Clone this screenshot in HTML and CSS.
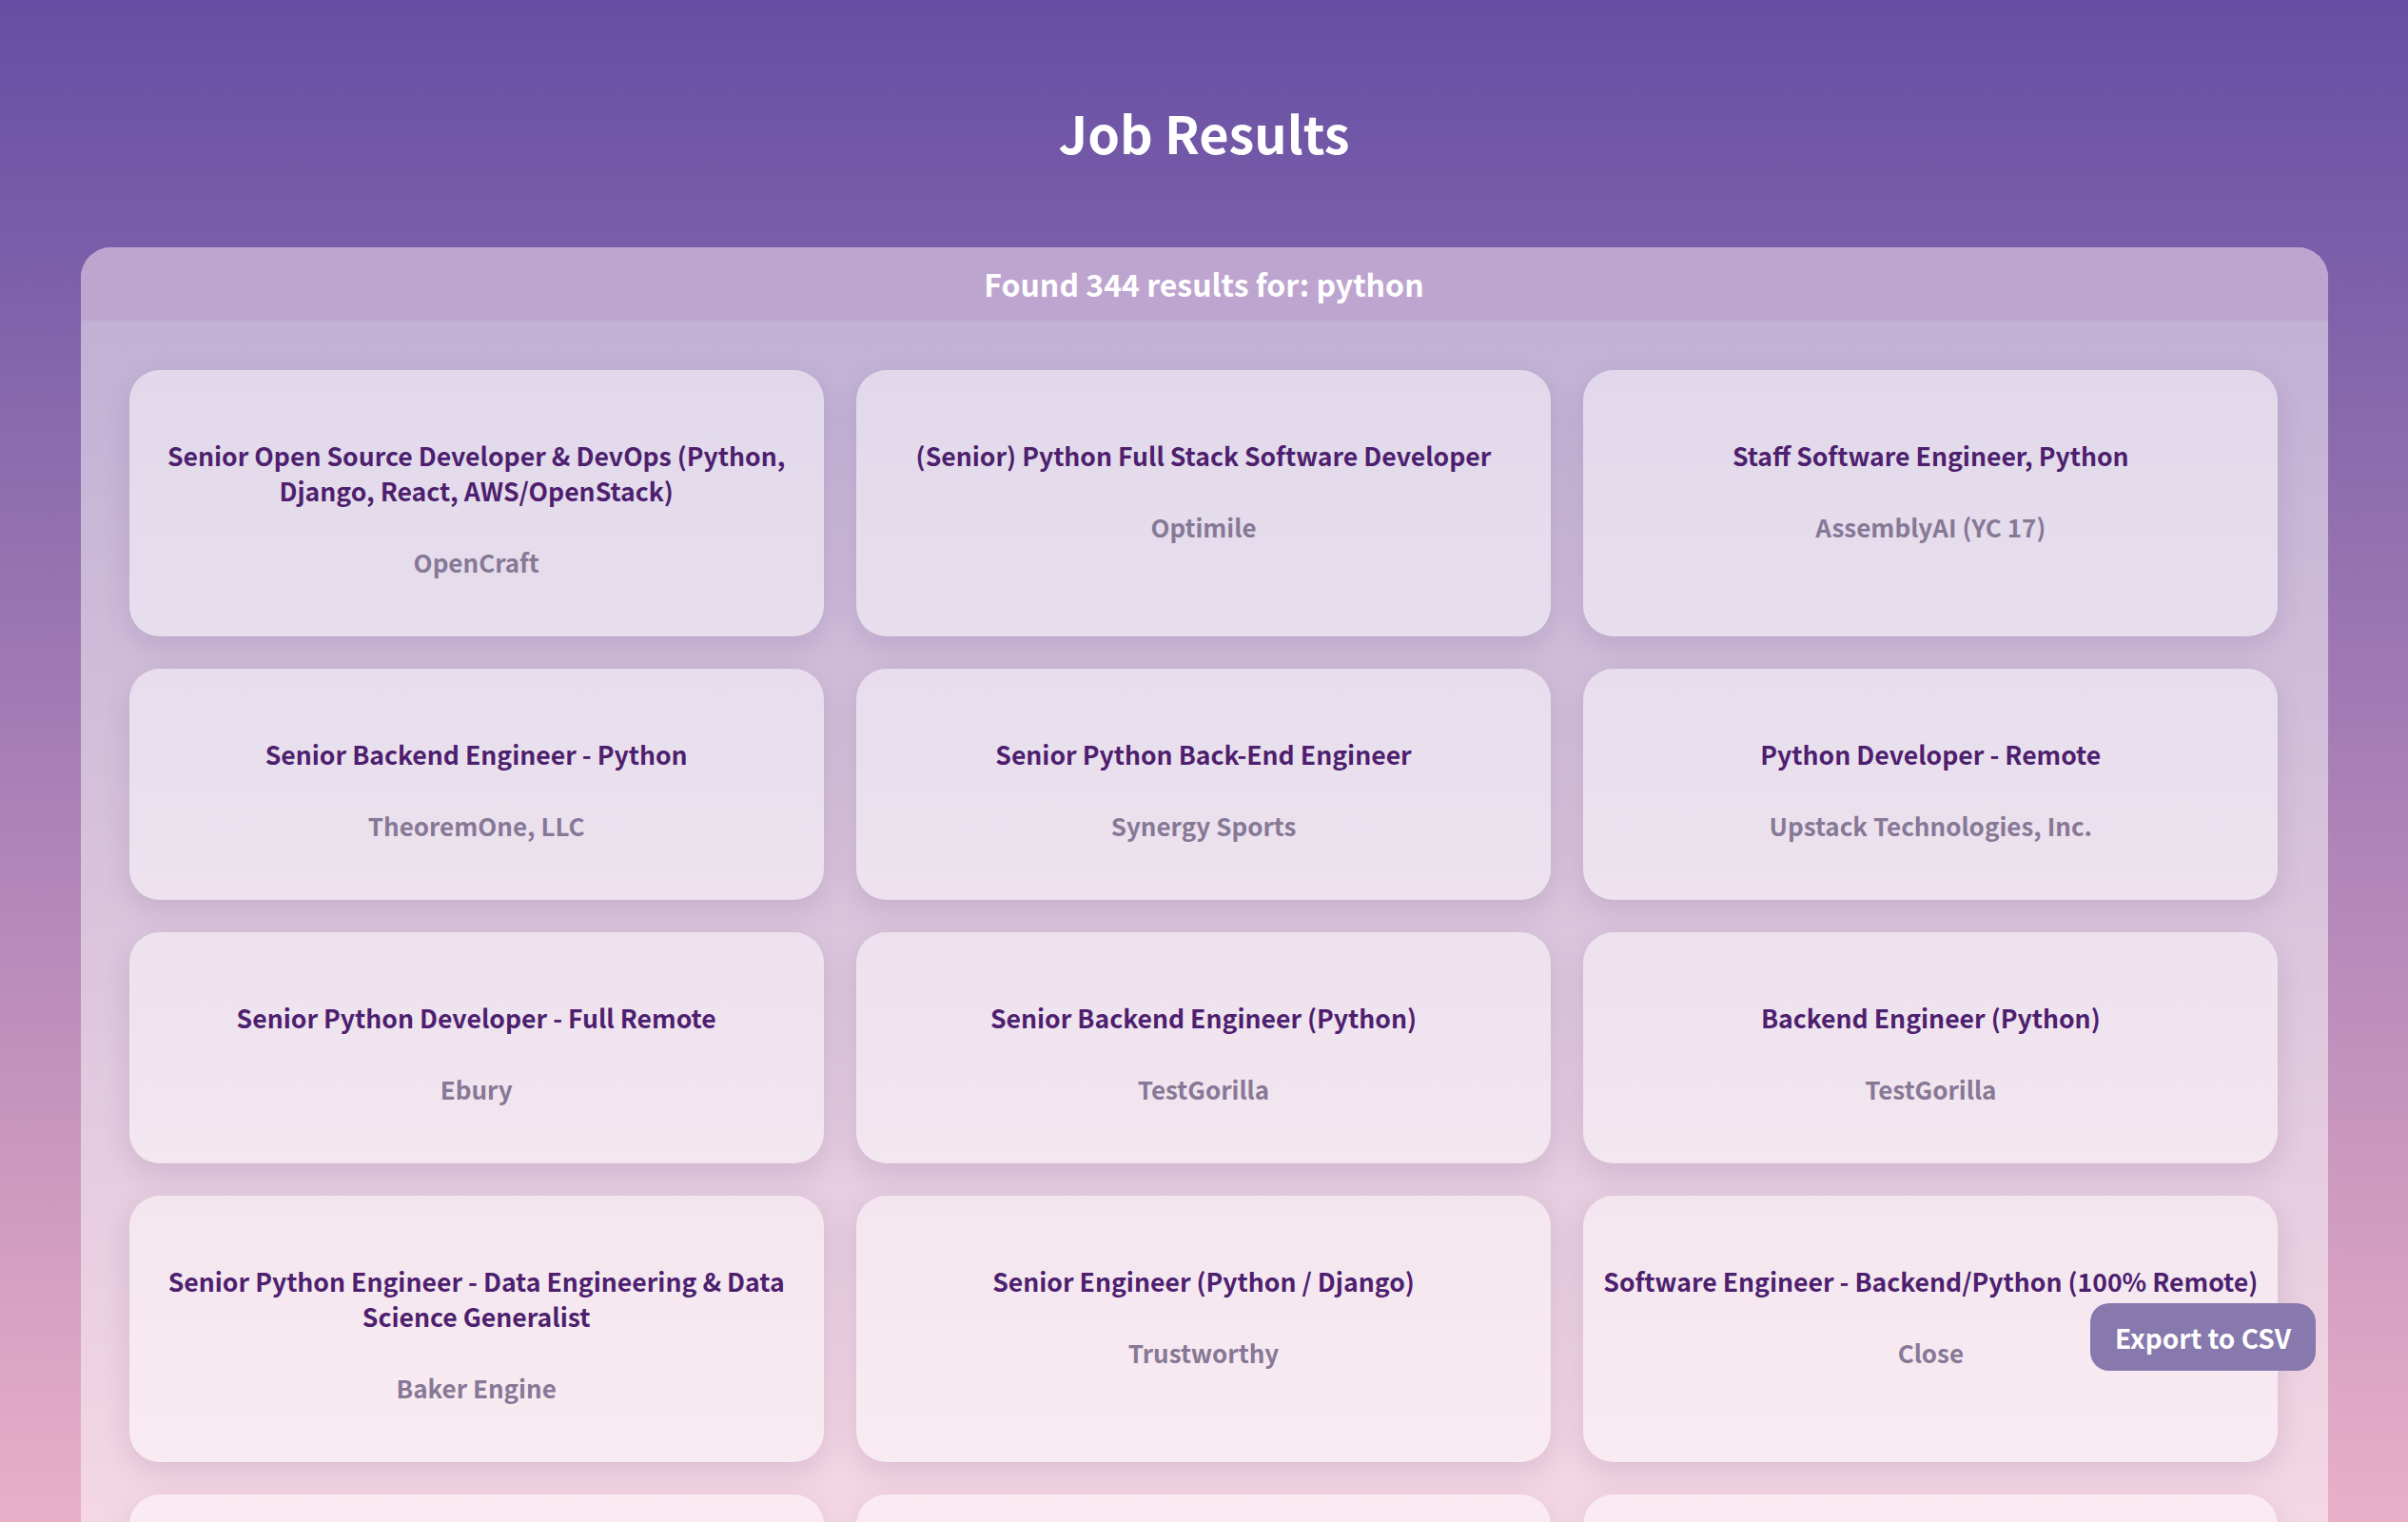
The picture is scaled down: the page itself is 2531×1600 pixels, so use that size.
FILE: index.html
```html
<!DOCTYPE html>
<html lang="en">
<head>
<meta charset="utf-8">
<title>Job Results</title>
<link rel="stylesheet" href="styles.css">
</head>
<body>
<h1 class="page-title">Job Results</h1>
<main class="results">
  <div class="results-head">Found 344 results for: python</div>
  <div class="grid">
    <div class="card"><h3 class="job">Senior Open Source Developer &amp; DevOps (Python, Django, React, AWS/OpenStack)</h3><p class="company">OpenCraft</p></div>
    <div class="card"><h3 class="job">(Senior) Python Full Stack Software Developer</h3><p class="company">Optimile</p></div>
    <div class="card"><h3 class="job">Staff Software Engineer, Python</h3><p class="company">AssemblyAI (YC 17)</p></div>
    <div class="card"><h3 class="job">Senior Backend Engineer - Python</h3><p class="company">TheoremOne, LLC</p></div>
    <div class="card"><h3 class="job">Senior Python Back-End Engineer</h3><p class="company">Synergy Sports</p></div>
    <div class="card"><h3 class="job">Python Developer - Remote</h3><p class="company">Upstack Technologies, Inc.</p></div>
    <div class="card"><h3 class="job">Senior Python Developer - Full Remote</h3><p class="company">Ebury</p></div>
    <div class="card"><h3 class="job">Senior Backend Engineer (Python)</h3><p class="company">TestGorilla</p></div>
    <div class="card"><h3 class="job">Backend Engineer (Python)</h3><p class="company">TestGorilla</p></div>
    <div class="card"><h3 class="job">Senior Python Engineer - Data Engineering &amp; Data Science Generalist</h3><p class="company">Baker Engine</p></div>
    <div class="card"><h3 class="job">Senior Engineer (Python / Django)</h3><p class="company">Trustworthy</p></div>
    <div class="card"><h3 class="job">Software Engineer - Backend/Python (100% Remote)</h3><p class="company">Close</p></div>
    <div class="card"><h3 class="job">Python Engineer</h3><p class="company">Remote Labs</p></div>
    <div class="card"><h3 class="job">Senior Python Developer</h3><p class="company">DataCraft</p></div>
    <div class="card"><h3 class="job">Backend Developer (Python)</h3><p class="company">Cloudwise</p></div>
  </div>
</main>
<button class="export-btn" type="button">Export to CSV</button>
</body>
</html>
```

FILE: styles.css
```css
html, body {
  margin: 0;
  padding: 0;
}

body {
  min-height: 100vh;
  background: linear-gradient(to bottom, #654ea3, #eaafc8) fixed;
  font-family: "Noto Sans CJK KR", "Noto Sans", sans-serif;
  padding-bottom: 60px;
}

.page-title {
  margin: 0;
  padding: 99px 0 81px;
  text-align: center;
  color: #ffffff;
  font-size: 54px;
  line-height: 80px;
  font-weight: 700;
}

.results {
  max-width: 2362px;
  margin: 0 auto;
  border-radius: 32px;
  overflow: hidden;
  background: rgba(255, 255, 255, 0.5);
}

.results-head {
  height: 77px;
  line-height: 77px;
  text-align: center;
  background: #bea5d0;
  color: #ffffff;
  font-size: 32px;
  font-weight: 700;
}

.grid {
  display: grid;
  grid-template-columns: repeat(3, 1fr);
  gap: 34px;
  padding: 52px 52px 52px 51px;
}

.card {
  background: linear-gradient(to bottom, rgba(255, 255, 255, 0.5), rgba(255, 255, 255, 0.52));
  border-radius: 32px;
  box-shadow: 0 10px 30px rgba(60, 20, 80, 0.12);
  padding: 71px 10px 60px;
  text-align: center;
}

.job {
  margin: 0 0 38px;
  color: #4e1f6f;
  font-size: 26.6px;
  line-height: 37px;
  font-weight: 700;
}

.company {
  margin: 0;
  color: #877896;
  font-size: 26px;
  line-height: 37px;
  font-weight: 700;
}

.export-btn {
  position: fixed;
  right: 97px;
  bottom: 159px;
  height: 71px;
  padding: 0 26px;
  border: none;
  border-radius: 20px;
  background: #8779ae;
  color: #ffffff;
  font-family: "Noto Sans CJK KR", "Noto Sans", sans-serif;
  font-size: 28px;
  font-weight: 700;
  cursor: pointer;
}
```
